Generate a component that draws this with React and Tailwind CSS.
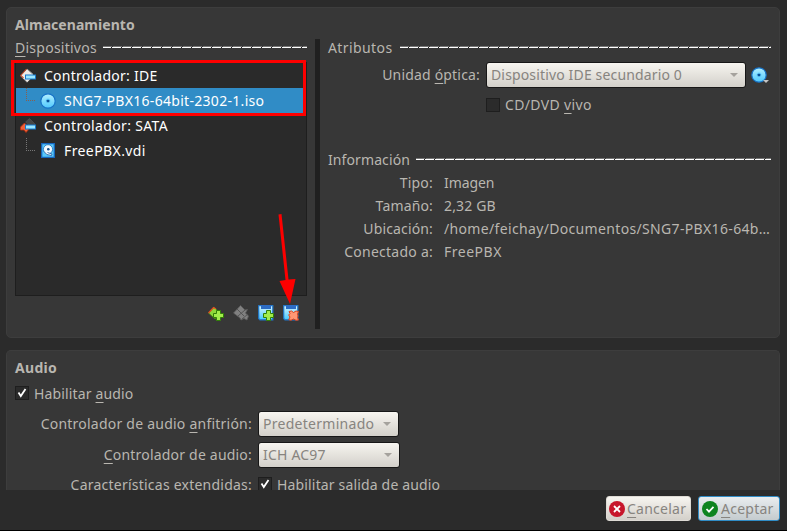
import React from "react";

function Separator() {
  return (
    <div className="mt-[8px] flex h-[2px] flex-1 flex-col">
      <div className="h-px bg-[repeating-linear-gradient(90deg,#767676_0_9px,#373737_9px_10px)]" />
      <div className="h-px bg-[repeating-linear-gradient(90deg,#fff_0_8px,#222_8px_9px,#fff_9px_10px)]" />
    </div>
  );
}

function Key({ children }) {
  return <span className="underline decoration-1 underline-offset-[3px] [text-decoration-skip-ink:none]">{children}</span>;
}

function Check({ checked }) {
  return (
    <div className="h-[14px] w-[14px] shrink-0 border border-[#1e1e1e] bg-[#2b2b2b]">
      {checked && (
        <svg viewBox="0 0 12 12" className="h-3 w-3">
          <path d="M2.5 5.5L4.8 9L9.5 2" fill="none" stroke="#fff" strokeWidth="1.8" />
        </svg>
      )}
    </div>
  );
}

function Combo({ className, children }) {
  return (
    <div className={`flex h-[26px] shrink-0 items-center justify-between rounded-[3px] border border-[#171717] bg-linear-to-b from-[#f7f5f0] to-[#d3d0ca] pl-1 pr-[7px] text-[#87847f] ${className}`}>
      {children}
      <svg viewBox="0 0 8 4" className="h-1 w-2 shrink-0"><path d="M0 0H8L4 4Z" fill="#a5a29d" /></svg>
    </div>
  );
}

function Disc() {
  return (
    <svg viewBox="0 0 16 16" className="h-4 w-4 shrink-0">
      <defs><linearGradient id="disc" x2="0" y2="1"><stop stopColor="#b4f0ff" /><stop offset="1" stopColor="#4dc8fd" /></linearGradient></defs>
      <circle cx="8" cy="8" r="7.2" fill="url(#disc)" stroke="#1672c8" strokeWidth="1.2" />
      <circle cx="8" cy="8" r="2.5" fill="#67d3ff" />
      <rect x="6.7" y="6.7" width="2.6" height="2.6" rx=".6" fill="#084f99" />
    </svg>
  );
}

function Controller({ sata }) {
  return (
    <svg viewBox="0 0 16 16" className="h-4 w-4 shrink-0">
      {sata ? (
        <>
          <path d="M9.5 0.5L15 6L12 10L5.5 4Z" fill="#454545" stroke="#555" strokeWidth=".6" />
          <path d="M4.5 5L9.5 10.5L6 14.5L4 12H0.5V9Z" fill="#ef6038" stroke="#b72c0b" strokeWidth=".8" />
        </>
      ) : (
        <>
          <path d="M7 1L14 7.5L7 14.5L0.5 8Z" fill="#eeeae5" />
          <path d="M6.5 1L0.7 7.5L3.5 10" fill="none" stroke="#c9502e" strokeWidth="1.1" />
          <path d="M7 1L13 6M4 11L7 14" stroke="#999" strokeWidth=".8" />
        </>
      )}
      <rect x="5.5" y="7" width="10" height="4" fill="#9ce7ff" stroke="#1477cb" />
    </svg>
  );
}

function HardDisk() {
  return (
    <svg viewBox="0 0 16 16" className="h-4 w-4 shrink-0">
      <path d="M1.7 .7H14.3V14.3H1.7Z" fill="#58c9fb" stroke="#1767bf" strokeWidth="1.3" />
      <circle cx="8" cy="6.3" r="4.6" fill="#f2fbff" stroke="#1b6fb8" strokeWidth=".8" />
      <circle cx="8.3" cy="6.3" r="1.3" fill="#174f8b" />
      <path d="M4 8.5Q6 12.5 11.5 12.5L12 11L7.5 9.5" fill="#f5fcff" stroke="#16569f" strokeWidth=".8" />
    </svg>
  );
}

function Plus() {
  return <path d="M8.5 5.5H12.5V8.5H15.5V12.5H12.5V15.5H8.5V12.5H5.5V8.5H8.5Z" fill="#a3ed4b" stroke="#317f08" />;
}

function AddController() {
  return (
    <svg viewBox="0 0 16 16" className="h-4 w-4">
      <path d="M6 2L12 8L7 14L0.5 8Z" fill="#8dd83a" stroke="#43850e" strokeWidth=".8" />
      <path d="M0.5 8L5.5 2.5L8 4" fill="none" stroke="#e34a21" strokeWidth="1.2" />
      <Plus />
    </svg>
  );
}

function RemoveController() {
  return (
    <svg viewBox="0 0 16 16" className="h-4 w-4">
      <path d="M7.5 .5L12 5L14.5 4.5L12.5 8L15.5 11L14 15L11 13.5L8 15L7 13L.5 8Z" fill="#808080" stroke="#5c5c5c" strokeWidth=".8" />
      <path d="M4 4L11 11M5 11L12 5M9 14L15 9" stroke="#505050" strokeWidth=".9" />
    </svg>
  );
}

function Medium({ remove }) {
  return (
    <svg viewBox="0 0 16 16" className="h-4 w-4">
      <defs><linearGradient id="floppy" x2="0" y2="1"><stop stopColor="#d5f4ff" /><stop offset="1" stopColor="#45c9fd" /></linearGradient></defs>
      <path d="M.7 .7H14.8V14.8H2L.7 13.5Z" fill="url(#floppy)" stroke="#2177c9" strokeWidth="1.2" />
      <rect x="3" y="0" width="10" height="4" fill="#2c6cc4" />
      {remove ? (
        <path d="M6 6.5L8.5 6L10.5 7.5L13 6L15.5 6.5L14.5 9L15 11L14.5 12.5L15.5 15L13 15.3L10.5 14L8 15.3L5.7 14.7L7 12L5.7 10L7 8.5Z" fill="#ff9774" stroke="#d94119" />
      ) : <Plus />}
    </svg>
  );
}

function Branch({ selected }) {
  return <div className={`mb-[12px] ml-[10px] mr-[5px] h-[13px] w-[9px] shrink-0 border-b border-l border-dotted ${selected ? "border-[#8a5f4c]" : "border-[#777]"}`} />;
}

function Info({ label, children, labelClass = "", valueClass = "" }) {
  return (
    <div className="flex h-[23px] items-start">
      <div className={`w-[105px] text-right ${labelClass}`}>{label}</div>
      <div className={`ml-[11px] ${valueClass}`}>{children}</div>
    </div>
  );
}

export default function App() {
  return (
    <div className="relative flex h-[531px] w-[787px] flex-col overflow-hidden whitespace-nowrap border-b border-black bg-[#2b2b2b] pl-[6px] pt-[7px] font-['Noto_Sans',sans-serif] text-[14px] leading-5 text-[#b9b6b0]">
      <section className="h-[331px] w-[774px] shrink-0 rounded-[5px] border border-[#3d3d3d] bg-[#373737] pl-2 pt-[7px]">
        <h2 className="h-[23px] font-bold tracking-[0.05px]">Almacenamiento</h2>
        <div className="flex">
          <div className="w-[292px]">
            <div className="flex h-6 gap-[6px]">
              <span className="tracking-[0.25px]"><Key>D</Key>ispositivos</span>
              <Separator />
            </div>
            <div className="h-[234px] border border-[#1e1e1e] bg-[#2a2a2a] text-white">
              <div className="flex h-[25px] items-center pl-1">
                <Controller /><span className="ml-2 tracking-[0.25px]">Controlador: IDE</span>
              </div>
              <div className="flex h-[25px] items-center bg-[#308cc6]">
                <Branch selected /><Disc /><span className="ml-2 tracking-[0.3px]">SNG7-PBX16-64bit-2302-1.iso</span>
              </div>
              <div className="flex h-[25px] items-center pl-1">
                <Controller sata /><span className="ml-2 tracking-[0.35px]">Controlador: SATA</span>
              </div>
              <div className="flex h-[25px] items-center">
                <Branch /><HardDisk /><span className="ml-2 tracking-[0.4px]">FreePBX.vdi</span>
              </div>
            </div>
            <div className="mt-[9px] flex justify-end gap-[9px] pr-[8px]">
              <AddController /><RemoveController /><Medium /><Medium remove />
            </div>
          </div>
          <div className="ml-2 mt-px h-[290px] w-[5px] bg-[#202020]" />
          <div className="ml-2 w-[443px]">
            <div className="flex h-6 gap-[7px]"><span className="tracking-[0.4px]">Atributos</span><Separator /></div>
            <div className="flex h-[25px] items-center">
              <div className="w-[152px] text-right tracking-[0.18px]">Unidad <Key>ó</Key>ptica:</div>
              <Combo className="ml-[6px] w-[260px] tracking-[0.15px]">Dispositivo IDE secundario 0</Combo>
              <div className="ml-[5px] flex items-end"><Disc /><svg viewBox="0 0 6 3" className="-ml-1 h-[3px] w-[6px]"><path d="M0 0H6L3 3Z" fill="#c4c4c4" /></svg></div>
            </div>
            <div className="mt-[8px] flex h-5 items-center gap-[5px] pl-[158px]"><Check /><span className="tracking-[0.35px]">CD/DVD <Key>v</Key>ivo</span></div>
            <div className="mt-[35px] flex h-[23px] gap-[6px]"><span className="tracking-[0.1px]">Información</span><Separator /></div>
            <Info label="Tipo:" labelClass="tracking-[0.2px]" valueClass="tracking-[-0.1px]">Imagen</Info>
            <Info label="Tamaño:" labelClass="tracking-[0.15px]" valueClass="tracking-[0.15px]">2,32 GB</Info>
            <Info label="Ubicación:" labelClass="tracking-[0.15px]" valueClass="tracking-[0.34px]">/home/feichay/Documentos/SNG7-PBX16-64b…</Info>
            <Info label="Conectado a:" labelClass="tracking-[0.25px]" valueClass="tracking-[0.5px]">FreePBX</Info>
          </div>
        </div>
      </section>
      <section className="mt-3 h-[140px] w-[774px] shrink-0 overflow-hidden rounded-t-[5px] border border-b-0 border-[#3d3d3d] bg-[#373737] pl-2 pt-[7px]">
        <h2 className="h-[26px] font-bold tracking-[0.3px]">Audio</h2>
        <div className="flex h-[27px] items-start gap-[5px]"><div className="pt-[2px]"><Check checked /></div><span className="tracking-[0.15px]">Habilitar <Key>a</Key>udio</span></div>
        <div className="flex h-[25px] items-center">
          <div className="w-[237px] text-right tracking-[0.23px]">Controlador de audio <Key>a</Key>nfitrión:</div>
          <Combo className="ml-[6px] w-[141px] tracking-[0.28px]">Predeterminado</Combo>
        </div>
        <div className="mt-[6px] flex h-[25px] items-center">
          <div className="w-[237px] text-right tracking-[0.2px]"><Key>C</Key>ontrolador de audio:</div>
          <Combo className="ml-[6px] w-[142px] tracking-[0.2px]">ICH AC97</Combo>
        </div>
        <div className="mt-[8px] flex h-5 items-start">
          <div className="w-[237px] text-right tracking-[0.23px]">Características extendidas:</div>
          <div className="ml-[6px] mr-[5px] pt-[2px]"><Check checked /></div>
          <span className="tracking-[0.16px]">Habilitar salida de audio</span>
        </div>
      </section>
      <footer className="mt-[6px] flex gap-[7px] pl-[600px] text-[#87847f]">
        <button className="flex h-[25px] w-[85px] items-center gap-[2px] rounded-[3px] border border-[#dedbd5] bg-linear-to-b from-[#f7f5f0] to-[#d3d0ca] pl-[2px]">
          <svg viewBox="0 0 16 16" className="h-4 w-4 shrink-0"><circle cx="8" cy="8" r="8" fill="#c7162b" /><path d="M5 5L11 11M11 5L5 11" stroke="#fff" strokeWidth="1.8" /></svg>
          <span className="tracking-[0.25px]"><Key>C</Key>ancelar</span>
        </button>
        <button className="flex h-[25px] w-[82px] items-center gap-[3px] rounded-[3px] border border-[#308cc6] bg-linear-to-b from-[#e9edef] to-[#c4cbce] pl-[3px]">
          <svg viewBox="0 0 16 16" className="h-4 w-4 shrink-0"><circle cx="8" cy="8" r="8" fill="#0e8420" /><path d="M4.5 8L7 10.7L11.5 5.8" fill="none" stroke="#fff" strokeWidth="1.8" /></svg>
          <span className="tracking-[0.25px]"><Key>A</Key>ceptar</span>
        </button>
      </footer>
      <div className="pointer-events-none absolute left-[11px] top-[60px] h-[56px] w-[295px] border-[3px] border-[#fe0000]" />
      <svg viewBox="0 0 18 92" className="pointer-events-none absolute left-[278px] top-[213px] h-[92px] w-[18px]">
        <path d="M.5 1.5L3.5 1L10.5 66.5L17.5 66L12 91L1.5 68L7.5 67Z" fill="#fe0000" />
      </svg>
    </div>
  );
}
